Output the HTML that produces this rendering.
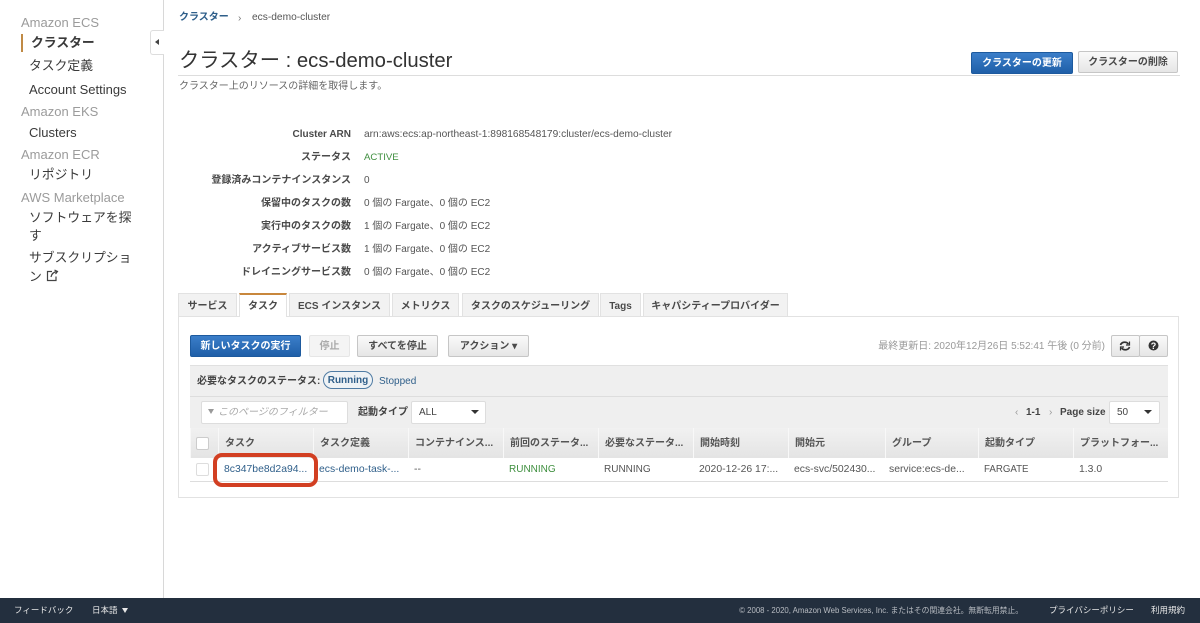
<!DOCTYPE html>
<html lang="ja"><head><meta charset="utf-8"><style>
html,body{margin:0;padding:0;background:#fff}
#p{position:relative;width:1200px;height:623px;overflow:hidden;background:#fff;font-family:"Liberation Sans","Noto Sans CJK JP",sans-serif;font-size:10px;color:#444}
.t,.b,.tab,.th,.box{position:absolute;white-space:nowrap}
.t{line-height:16px}
.r{text-align:right;width:180px;left:171px;font-weight:bold;color:#4a4a4a}
.n{font-size:12.8px;line-height:18px;color:#3a3a3a}
.h{font-size:13px;line-height:18px;color:#9b9b9b;left:21px}
.b{height:21px;line-height:20px;text-align:center;box-sizing:border-box;border:1px solid #c6c6c6;border-radius:2px;background:linear-gradient(#fafafa,#e6e6e6);font-weight:bold;color:#4a4a4a}
.blue{background:linear-gradient(#3b7ec9,#1f5fa8);border-color:#1d5a9e;color:#fff}
.tab{top:293px;height:23px;line-height:25px;text-align:center;box-sizing:border-box;background:#f2f2f2;border:1px solid #e2e2e2;border-bottom:0;font-weight:bold;color:#4a4a4a}
.th{top:428px;height:30px;line-height:32px;padding-left:6px;box-sizing:border-box;background:linear-gradient(#f1f1f1,#e4e4e4);border-left:1px solid #f8f8f8;font-weight:bold;color:#555;font-size:10px}
.cell{top:462px;color:#555;font-size:10.4px}
.box{background:#fff;border:1px solid #ddd;border-radius:2px;box-sizing:border-box}
.lk{color:#2f5f8a}
.v{left:364px;color:#555}
.f{color:#e8e8e8;font-size:8.5px;top:602px}
</style></head><body><div id="p">
<div class="box" style="left:163px;top:0;width:1px;height:598px;border:0;background:#d8d8d8;border-radius:0"></div>
<div class="t h" style="top:14px">Amazon ECS</div>
<div class="box" style="left:21px;top:34px;width:2px;height:18px;border:0;background:#c08a45;border-radius:0"></div>
<div class="t n" style="left:31px;top:34px;font-weight:bold">クラスター</div>
<div class="t n" style="left:29px;top:57px">タスク定義</div>
<div class="t n" style="left:29px;top:81px;font-size:13px">Account Settings</div>
<div class="t h" style="top:103px">Amazon EKS</div>
<div class="t n" style="left:29px;top:124px;font-size:13px">Clusters</div>
<div class="t h" style="top:146px">Amazon ECR</div>
<div class="t n" style="left:29px;top:166px">リポジトリ</div>
<div class="t h" style="top:189px">AWS Marketplace</div>
<div class="t n" style="left:29px;top:209px">ソフトウェアを探</div>
<div class="t n" style="left:29px;top:227px">す</div>
<div class="t n" style="left:29px;top:249px">サブスクリプショ</div>
<div class="t n" style="left:29px;top:268px">ン</div>
<svg style="position:absolute;left:46px;top:269px" width="13" height="13" viewBox="0 0 13 13" fill="none" stroke="#444" stroke-width="1.2"><path d="M6 2.500H1.500V11.500H10V7.500M5 8C5.500 5 7.500 3 11 2.500M8.500 1L11.500 2.500L9.500 5"/></svg>
<div class="box" style="left:150px;top:30px;width:14px;height:25px;border-right:0;border-radius:3px 0 0 3px"></div>
<div style="position:absolute;left:155px;top:39px;width:0;height:0;border:3.5px solid transparent;border-right:4px solid #444;border-left:0"></div>

<div class="t" style="left:179px;top:10px;font-weight:bold;color:#2f5f8a">クラスター</div>
<div class="t" style="left:238px;top:11px;color:#777">›</div>
<div class="t" style="left:252px;top:10px;color:#555;font-size:10.2px">ecs-demo-cluster</div>
<div class="t" style="left:179px;top:47px;font-size:20.3px;line-height:28px;color:#333">クラスター : ecs-demo-cluster</div>
<div class="box" style="left:178px;top:75px;width:1002px;height:1px;border:0;background:#ddd;border-radius:0"></div>
<div class="t" style="left:179px;top:79px;color:#666">クラスター上のリソースの詳細を取得します。</div>
<div class="b blue" style="left:971px;top:52px;width:102px;height:22px;line-height:22px">クラスターの更新</div>
<div class="b" style="left:1078px;top:51px;width:100px;height:22px;line-height:22px">クラスターの削除</div>

<div class="t r" style="top:127px">Cluster ARN</div><div class="t v" style="top:127px;font-size:10.2px">arn:aws:ecs:ap-northeast-1:898168548179:cluster/ecs-demo-cluster</div>
<div class="t r" style="top:150px">ステータス</div><div class="t v" style="top:150px;color:#3f8f3f;font-size:9.6px">ACTIVE</div>
<div class="t r" style="top:173px">登録済みコンテナインスタンス</div><div class="t v" style="top:173px">0</div>
<div class="t r" style="top:196px">保留中のタスクの数</div><div class="t v" style="top:196px">0 個の Fargate、0 個の EC2</div>
<div class="t r" style="top:219px">実行中のタスクの数</div><div class="t v" style="top:219px">1 個の Fargate、0 個の EC2</div>
<div class="t r" style="top:242px">アクティブサービス数</div><div class="t v" style="top:242px">1 個の Fargate、0 個の EC2</div>
<div class="t r" style="top:265px">ドレイニングサービス数</div><div class="t v" style="top:265px">0 個の Fargate、0 個の EC2</div>

<div class="box" style="left:178px;top:316px;width:1001px;height:182px;border-color:#e2e2e2;border-radius:0"></div>
<div class="tab" style="left:178px;width:59px">サービス</div>
<div class="tab" style="left:239px;width:48px;background:#fff;border-top:2px solid #c8873c;height:24px;z-index:2;line-height:24px">タスク</div>
<div class="tab" style="left:289px;width:101px">ECS インスタンス</div>
<div class="tab" style="left:392px;width:67px">メトリクス</div>
<div class="tab" style="left:462px;width:137px">タスクのスケジューリング</div>
<div class="tab" style="left:600px;width:41px">Tags</div>
<div class="tab" style="left:643px;width:145px">キャパシティープロバイダー</div>

<div class="b blue" style="left:190px;top:335px;width:111px;height:22px;line-height:21px">新しいタスクの実行</div>
<div class="b" style="left:309px;top:335px;width:41px;height:22px;line-height:21px;background:#f4f4f4;border-color:#e6e6e6;color:#aaa">停止</div>
<div class="b" style="left:357px;top:335px;width:81px;height:22px;line-height:21px">すべてを停止</div>
<div class="b" style="left:448px;top:335px;width:81px;height:22px;line-height:21px">アクション ▾</div>
<div class="t" style="right:95px;top:339px;color:#999">最終更新日: 2020年12月26日 5:52:41 午後 (0 分前)</div>
<div class="b" style="left:1111px;top:335px;width:29px;height:22px"></div>
<div class="b" style="left:1139px;top:335px;width:29px;height:22px"></div>
<svg style="position:absolute;left:1119px;top:340px" width="12" height="12" viewBox="0 0 12 12" fill="none" stroke="#333" stroke-width="1.7"><path d="M1.500 5C2.500 2 7 1 9.500 4M10.500 7C9.500 10 5 11 2.500 8"/><path d="M10.500 1.500V5H7M1.500 10.500V7H5" stroke-width="1.2"/></svg>
<svg style="position:absolute;left:1148px;top:340px" width="11" height="11" viewBox="0 0 11 11"><circle cx="5.500" cy="5.500" r="5" fill="#333"/><text x="5.500" y="8.800" font-size="9" font-weight="bold" text-anchor="middle" fill="#fff" font-family="Liberation Sans">?</text></svg>

<div style="position:absolute;left:190px;top:365px;width:978px;height:31px;background:#efefef;border-top:1px solid #e0e0e0;box-sizing:border-box"></div>
<div style="position:absolute;left:190px;top:396px;width:978px;height:1px;background:#ddd"></div>
<div style="position:absolute;left:190px;top:397px;width:978px;height:31px;background:#efefef"></div>
<div class="t" style="left:197px;top:374px;font-weight:bold;color:#444">必要なタスクのステータス:</div>
<div class="box" style="left:323px;top:371px;width:50px;height:18px;border:1px solid #4f7ba3;border-radius:9px;background:#eef2f5;text-align:center;line-height:18px;font-weight:bold;color:#2f5f8a">Running</div>
<div class="t lk" style="left:379px;top:374px">Stopped</div>
<div class="box" style="left:201px;top:401px;width:147px;height:23px;line-height:22px;padding-left:16px;color:#aaa;font-style:italic">このページのフィルター</div>
<div style="position:absolute;left:208px;top:409px;width:0;height:0;border:3px solid transparent;border-top:5px solid #999;border-bottom:0"></div>
<div class="t" style="left:358px;top:405px;font-weight:bold;color:#444">起動タイプ</div>
<div class="box" style="left:411px;top:401px;width:75px;height:23px;line-height:22px;padding-left:7px;color:#444">ALL</div>
<div style="position:absolute;left:471px;top:410px;width:0;height:0;border:4px solid transparent;border-top:4px solid #333;border-bottom:0"></div>
<div class="t" style="left:1015px;top:405px;color:#999">‹</div>
<div class="t" style="left:1026px;top:405px;font-weight:bold">1-1</div>
<div class="t" style="left:1049px;top:405px;color:#999">›</div>
<div class="t" style="left:1060px;top:405px;font-weight:bold">Page size</div>
<div class="box" style="left:1109px;top:401px;width:51px;height:23px;line-height:22px;padding-left:7px">50</div>
<div style="position:absolute;left:1144px;top:410px;width:0;height:0;border:4px solid transparent;border-top:4px solid #333;border-bottom:0"></div>

<div class="th" style="left:190px;width:28px"></div>
<div class="th" style="left:218px;width:95px">タスク</div>
<div class="th" style="left:313px;width:95px">タスク定義</div>
<div class="th" style="left:408px;width:95px">コンテナインス...</div>
<div class="th" style="left:503px;width:95px">前回のステータ...</div>
<div class="th" style="left:598px;width:95px">必要なステータ...</div>
<div class="th" style="left:693px;width:95px">開始時刻</div>
<div class="th" style="left:788px;width:97px">開始元</div>
<div class="th" style="left:885px;width:93px">グループ</div>
<div class="th" style="left:978px;width:95px">起動タイプ</div>
<div class="th" style="left:1073px;width:95px">プラットフォー...</div>
<div class="box" style="left:196px;top:437px;width:13px;height:13px;border-color:#ccc"></div>
<div class="box" style="left:196px;top:463px;width:13px;height:13px;border-color:#ddd"></div>
<div class="box" style="left:190px;top:481px;width:978px;height:1px;background:#ddd;border:0;border-radius:0"></div>
<div class="t cell lk" style="left:224px">8c347be8d2a94...</div>
<div class="t cell lk" style="left:319px">ecs-demo-task-...</div>
<div class="t cell" style="left:414px">--</div>
<div class="t cell" style="left:509px;color:#3f8f3f;font-size:10px">RUNNING</div>
<div class="t cell" style="left:604px;font-size:10px">RUNNING</div>
<div class="t cell" style="left:699px">2020-12-26 17:...</div>
<div class="t cell" style="left:794px">ecs-svc/502430...</div>
<div class="t cell" style="left:889px">service:ecs-de...</div>
<div class="t cell" style="left:984px;font-size:9.7px">FARGATE</div>
<div class="t cell" style="left:1079px">1.3.0</div>
<div style="position:absolute;left:213px;top:453px;width:105px;height:34px;box-sizing:border-box;border:4.5px solid #d23f22;border-radius:9px"></div>

<div style="position:absolute;left:0;top:598px;width:1200px;height:25px;background:#232f3e"></div>
<div class="t f" style="left:14px">フィードバック</div>
<div class="t f" style="left:92px">日本語</div>
<div style="position:absolute;left:122px;top:608px;width:0;height:0;border:3.5px solid transparent;border-top:5px solid #e8e8e8;border-bottom:0"></div>
<div class="t" style="right:177px;top:603px;color:#b8bcc2;font-size:7.800px">© 2008 - 2020, Amazon Web Services, Inc. またはその関連会社。無断転用禁止。</div>
<div class="t f" style="left:1049px">プライバシーポリシー</div>
<div class="t f" style="left:1151px">利用規約</div>
</div></body></html>
